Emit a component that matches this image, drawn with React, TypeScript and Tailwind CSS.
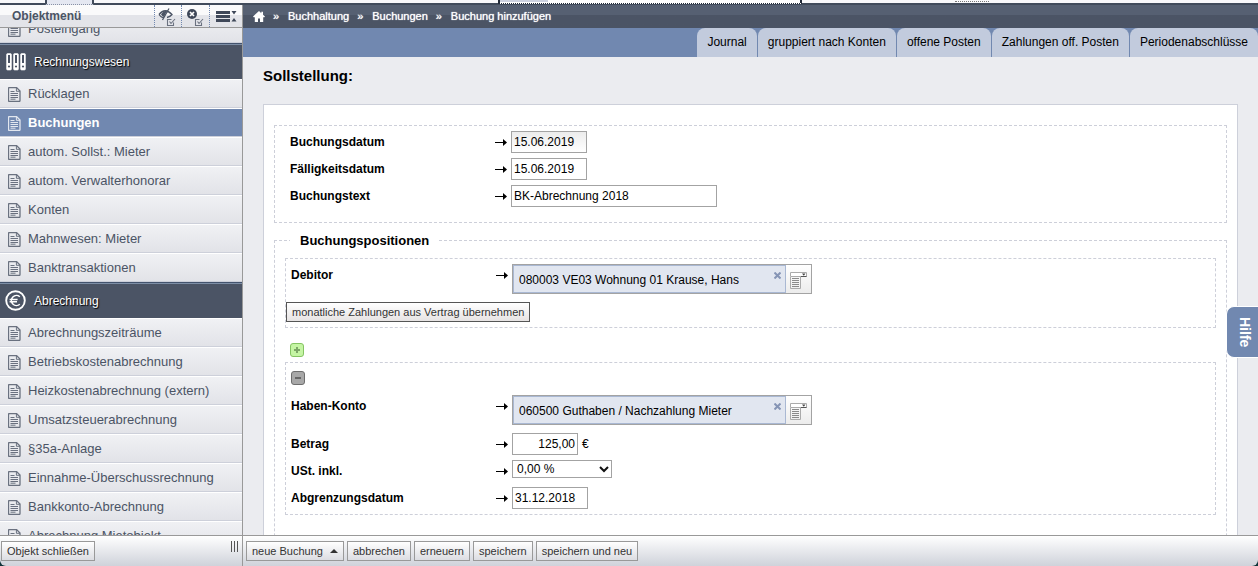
import React, { useState } from "react";

const objectItems = [
  "Rücklagen",
  "Buchungen",
  "autom. Sollst.: Mieter",
  "autom. Verwalterhonorar",
  "Konten",
  "Mahnwesen: Mieter",
  "Banktransaktionen",
];

const billingItems = [
  "Abrechnungszeiträume",
  "Betriebskostenabrechnung",
  "Heizkostenabrechnung (extern)",
  "Umsatzsteuerabrechnung",
  "§35a-Anlage",
  "Einnahme-Überschussrechnung",
  "Bankkonto-Abrechnung",
  "Abrechnung Mietobjekt",
];

const tabs = [
  "Journal",
  "gruppiert nach Konten",
  "offene Posten",
  "Zahlungen off. Posten",
  "Periodenabschlüsse",
];

const crumbs = ["Buchhaltung", "Buchungen", "Buchung hinzufügen"];

const DocIcon = () => (
  <svg width="13" height="15" viewBox="0 0 13 15" className="mt-px shrink-0 opacity-80" fill="none" stroke="currentColor">
    <path d="M1.5 .5h7l3.500 3.500v9.500q0 1-1 1H1.500q-1 0-1-1v-12q0-1 1-1z" strokeWidth="1.3" />
    <path d="M8.400 .500v3.800h3.600M2.500 4.500h4M2.500 6.500h7.500M2.500 8.500h7.500M2.500 10.500h7.500M2.500 12.200h5" />
  </svg>
);

const BinderIcon = () => (
  <svg width="21" height="18" viewBox="-1 0 21 18" className="shrink-0">
    {[0, 7, 14].map((x) => (
      <g key={x} transform={`translate(${x} 0)`}>
        <rect x=".6" y=".6" width="4.800" height="16.400" rx="1" fill="#fff" stroke="#fff" strokeWidth=".6" />
        <rect x="2" y="2" width="2" height="8" fill="#4b5465" />
        <circle cx="3" cy="13.500" r="1.100" fill="#4b5465" />
      </g>
    ))}
  </svg>
);

const EuroIcon = () => (
  <svg width="21" height="21" viewBox="0 0 21 21" className="shrink-0" fill="none" stroke="#fff">
    <circle cx="10.5" cy="10.5" r="9.3" strokeWidth="1.9" />
    <path d="M14.800 6.800a5 5 0 1 0 0 7.400M4.600 9.400h8M4.600 11.700h7.400" strokeWidth="1.5" />
  </svg>
);

const ArrowIcon = () => (
  <svg width="12" height="9" viewBox="0 0 12 9" className="mr-1 shrink-0">
    <path d="M0 4h9v1H0z" />
    <path d="M8 1l4 3.500-4 3.500z" />
  </svg>
);

const CheckMark = () => (
  <path
    d="M13.500 11.500h-4v6h6v-3M11.500 13.500l1.500 2 4-4.500"
    fill="none"
    stroke="#6b7280"
    strokeWidth="1.1"
  />
);

const HiddenIcon = () => (
  <svg width="18" height="18" viewBox="0 0 18 18" className="mt-px">
    <path d="M1 6.500Q7 -1 14 6.500Q12 9 9 9.500M1 6.500Q3 9.500 5.500 10M11 .5L4.500 12" fill="none" stroke="#4b5465" strokeWidth="1.3" />
    <path d="M3 6.500Q5 3 9 2.500L6 9Q4 8 3 6.500z" fill="#4b5465" />
    <CheckMark />
  </svg>
);

const CloseAllIcon = () => (
  <svg width="18" height="18" viewBox="0 0 18 18" className="mt-px">
    <circle cx="6" cy="6" r="5" fill="#3f4859" />
    <path d="M4 4l4 4M8 4l-4 4" stroke="#fff" strokeWidth="1.7" />
    <CheckMark />
  </svg>
);

const ListIcon = () => (
  <svg width="21" height="13" viewBox="0 0 21 13" fill="#3f4859">
    <path d="M0 1h14v3H0zM0 5h14v3H0zM0 9h14v3H0zM15.500 1h5L18 4.500zM15.500 11.500h5L18 8z" />
  </svg>
);

const HomeIcon = () => (
  <svg width="12" height="11" viewBox="0 0 12 11" fill="#fff">
    <path d="M6 0L0 5.500l1 1L1.800 6v5H5V7.500h2V11h3.200V6l.8.500 1-1-2-1.800V.800H8.300v1.400z" />
  </svg>
);

const PickerIcon = () => (
  <svg width="17" height="17" viewBox="0 0 17 17" fill="none" stroke="#8a8a8a">
    <path d="M.5 5v11.500h10V5" stroke="#aaa" />
    <path d="M.5 .5h16v4H.5z" fill="#fff" stroke="#aaa" />
    <path d="M11 4.500h5.500" stroke="#555" />
    <path d="M2 6.500h7M2 8.500h7M2 10.500h7M2 12.500h7M2 14.500h7" />
    <path d="M12 1.500h3.500l-1.700 2.300z" fill="#444" stroke="none" />
  </svg>
);

type MenuItemProps = { label: string; active?: boolean };

const MenuItem = ({ label, active }: MenuItemProps) => (
  <li>
    <a
      href="#"
      className={`flex h-[29px] items-center gap-[7px] border-t border-b border-t-white border-b-[#cdd0da] pl-2 text-[13px] ${
        active
          ? "bg-[#7188b0] font-bold text-white"
          : "bg-linear-to-b from-[#f0f1f4] to-[#e2e3e8] text-[#4b5465]"
      }`}
    >
      <DocIcon />
      {label}
    </a>
  </li>
);

type MenuSectionProps = { label: string; icon: React.ReactNode };

const MenuSection = ({ label, icon }: MenuSectionProps) => (
  <h2 className="flex h-9 items-center border-t border-[#43536d] bg-[#4b5465] text-xs text-white shadow-[inset_0_1px_0_#7d8ea6] text-shadow-[1px_1px_1px_#000]">
    <span className="flex w-[34px] justify-start pl-[5px]">{icon}</span>
    {label}
  </h2>
);

type FieldProps = { label: string; id: string; children: React.ReactNode };

const Field = ({ label, id, children }: FieldProps) => (
  <div className="flex items-start">
    <div className="flex h-[22px] w-[221px] shrink-0 items-center justify-between">
      <label htmlFor={id} className="font-bold">
        {label}
      </label>
      <ArrowIcon />
    </div>
    {children}
  </div>
);

const inputClass = "h-[22px] border border-[#a3a3a3] bg-white px-[2px] outline-none";

const AccountPicker = ({ id, initial }: { id: string; initial: string }) => {
  const [value, setValue] = useState(initial);
  return (
    <div className="flex h-[30px] w-[300px] border border-[#a3a3a3]">
      <div className="flex flex-1 items-start border border-[#a9b8d3] bg-[#e1e6f0]">
        <input
          id={id}
          value={value}
          onChange={(e) => setValue(e.target.value)}
          className="h-[27px] min-w-0 flex-1 pl-[5px] pt-px outline-none"
        />
        <button type="button" aria-label="Leeren" onClick={() => setValue("")} className="p-[4px] pt-[6px]">
          <svg width="7" height="7" viewBox="0 0 7 7" stroke="#8594b5" strokeWidth="2">
            <path d="M.5 .5l6 6M6.500 .5l-6 6" />
          </svg>
        </button>
      </div>
      <button
        type="button"
        aria-label="Auswählen"
        className="flex w-[25px] items-center justify-center bg-linear-to-b from-white to-[#ececec] pt-[2px]"
      >
        <PickerIcon />
      </button>
    </div>
  );
};

const FooterButton = ({ children }: { children: React.ReactNode }) => (
  <button
    type="button"
    className="flex h-5 items-center gap-[7px] border border-[#999] bg-linear-to-b from-white to-[#dcdde2] px-[5px] text-[11px] whitespace-nowrap text-[#333]"
  >
    {children}
  </button>
);

const TopStrip = () => (
  <div className="flex h-[5px] shrink-0 border-b-2 border-[#414b5b] bg-[#f8f8fa]">
    <div className="ml-[45px] h-[5px] w-[49px] border-x-2 border-b border-[#414b5b] border-b-[#8890a4] bg-[#e4e7f1] [border-bottom-style:dotted]" />
    <div className="ml-[404px] flex h-1 w-[304px] border-x-2 border-b border-[#222a38] bg-white [border-bottom-style:dotted]">
      <div className="h-[2px] w-12 bg-[#cdd2e0]" />
    </div>
    <div className="ml-[153px] h-[2px] w-[34px] border-b border-dotted border-[#777]" />
  </div>
);

const Sidebar = () => (
  <aside className="flex w-[243px] shrink-0 flex-col border-r border-[#999]">
    <header className="flex h-[23px] shrink-0 items-stretch border-b border-[#999] bg-linear-to-b from-[#fafafb] from-45% to-[#e3e4e9] to-45%">
      <h1 className="flex flex-1 items-center pl-3 text-xs font-bold text-[#4b5465]">Objektmenü</h1>
      <button type="button" aria-label="Ausblenden" className="w-[27px] border-l border-dotted border-[#7188b0] pl-[3px]">
        <HiddenIcon />
      </button>
      <button type="button" aria-label="Schließen" className="w-7 border-l border-dotted border-[#7188b0] pl-1">
        <CloseAllIcon />
      </button>
      <button type="button" aria-label="Liste" className="w-[33px] border-l border-dotted border-[#7188b0] pl-[6px]">
        <ListIcon />
      </button>
    </header>
    <nav className="min-h-0 flex-1 overflow-hidden bg-[#e8e9ed]">
      <ul className="-mt-3.5">
        <MenuItem label="Posteingang" />
      </ul>
      <MenuSection label="Rechnungswesen" icon={<BinderIcon />} />
      <ul>
        {objectItems.map((item) => (
          <MenuItem key={item} label={item} active={item === "Buchungen"} />
        ))}
      </ul>
      <MenuSection label="Abrechnung" icon={<EuroIcon />} />
      <ul>
        {billingItems.map((item) => (
          <MenuItem key={item} label={item} />
        ))}
      </ul>
    </nav>
  </aside>
);

const BookingForm = () => (
  <form className="mt-5 border border-[#cdd0da] bg-white px-[10px] pt-5 pb-10 text-xs text-black">
    <div className="flex flex-col gap-[5px] border border-dashed border-[#cdcfd9] px-[15px] pt-[5px] pb-[15px]">
      <Field label="Buchungsdatum" id="buchungsdatum">
        <input
          id="buchungsdatum"
          defaultValue="15.06.2019"
          className="h-[22px] w-[76px] border border-[#a3a3a3] bg-linear-to-b from-[#ececec] to-white px-[2px] outline-none"
        />
      </Field>
      <Field label="Fälligkeitsdatum" id="faelligkeit">
        <input id="faelligkeit" defaultValue="15.06.2019" className={`${inputClass} w-[76px]`} />
      </Field>
      <Field label="Buchungstext" id="buchungstext">
        <input id="buchungstext" defaultValue="BK-Abrechnung 2018" className={`${inputClass} w-[206px]`} />
      </Field>
    </div>

    <fieldset className="mt-[10px] border border-dashed border-[#cdcfd9] px-[10px] pb-20">
      <legend className="ml-[5px] px-[10px] text-[13px] leading-[15px] font-bold">Buchungspositionen</legend>
      <div className="mt-[10px] border border-dashed border-[#cdcfd9] py-[5px]">
        <div className="px-[5px]">
          <Field label="Debitor" id="debitor">
            <AccountPicker id="debitor" initial="080003 VE03 Wohnung 01 Krause, Hans" />
          </Field>
        </div>
        <button
          type="button"
          className="mt-2 flex h-5 items-center border border-[#555] bg-linear-to-b from-white to-[#e6e3e3] px-[5px] text-[11px] text-[#333]"
        >
          monatliche Zahlungen aus Vertrag übernehmen
        </button>
      </div>

      <button type="button" aria-label="Position hinzufügen" className="mt-[15px] ml-[5px] block">
        <svg width="14" height="14" viewBox="0 0 14 14">
          <rect x=".5" y=".5" width="13" height="13" rx="2.500" fill="#c5f5a4" stroke="#85c463" />
          <path d="M7 4v6M4 7h6" stroke="#7da767" strokeWidth="2" />
        </svg>
      </button>

      <div className="mt-[5px] border border-dashed border-[#cdcfd9] px-[5px] pt-2 pb-[5px]">
        <button type="button" aria-label="Position entfernen" className="block">
          <svg width="14" height="14" viewBox="0 0 14 14">
            <rect x=".5" y=".5" width="13" height="13" rx="2.500" fill="#a8a8a8" stroke="#6e6e6e" />
            <path d="M4 7h6" stroke="#666" strokeWidth="2" />
          </svg>
        </button>
        <div className="mt-[10px]">
          <Field label="Haben-Konto" id="habenkonto">
            <AccountPicker id="habenkonto" initial="060500 Guthaben / Nachzahlung Mieter" />
          </Field>
        </div>
        <div className="mt-2 flex flex-col gap-[5px]">
          <Field label="Betrag" id="betrag">
            <input id="betrag" defaultValue="125,00" className={`${inputClass} w-[66px] text-right`} />
            <span className="ml-1 leading-[22px]">€</span>
          </Field>
          <Field label="USt. inkl." id="ust">
            <div className="relative">
              <select id="ust" className="block h-[18px] w-[100px] appearance-none border border-[#a3a3a3] bg-white px-1 outline-none">
                <option>0,00 %</option>
                <option>7,00 %</option>
                <option>19,00 %</option>
              </select>
              <svg width="10" height="7" viewBox="0 0 10 7" className="pointer-events-none absolute top-[6px] right-[3px]">
                <path d="M1 1l4 4 4-4" fill="none" stroke="#111" strokeWidth="2" />
              </svg>
            </div>
          </Field>
          <Field label="Abgrenzungsdatum" id="abgrenzung">
            <input id="abgrenzung" defaultValue="31.12.2018" className={`${inputClass} w-[76px]`} />
          </Field>
        </div>
      </div>
    </fieldset>
  </form>
);

export default function App() {
  return (
    <div className="flex h-screen flex-col overflow-hidden bg-[#0f3338] font-['Liberation_Sans',Arial,sans-serif]">
      <TopStrip />
      <div className="flex min-h-0 flex-1">
        <Sidebar />
        <main className="relative flex min-w-0 flex-1 flex-col bg-[#ebecf0]">
          <nav className="flex h-[23px] shrink-0 items-center bg-linear-to-b from-[#566072] from-45% to-[#4b5465] to-45% pl-[10px] text-[11px] text-white text-shadow-[0_0_1px_#fff]">
            <a href="#" aria-label="Startseite">
              <HomeIcon />
            </a>
            {crumbs.map((crumb) => (
              <React.Fragment key={crumb}>
                <span className="w-[23px] pl-2">»</span>
                <a href="#">{crumb}</a>
              </React.Fragment>
            ))}
          </nav>
          <nav className="flex h-[29px] shrink-0 justify-end gap-px bg-[#7188b0]">
            {tabs.map((tab) => (
              <a
                key={tab}
                href="#"
                className="flex items-center rounded-t-lg bg-[#c2cbdd] px-[10px] pb-[2px] text-xs whitespace-nowrap text-black"
              >
                {tab}
              </a>
            ))}
          </nav>
          <div className="min-h-0 flex-1 overflow-hidden px-5 pt-[10px]">
            <h2 className="text-[15px] leading-[17px] font-bold text-black">Sollstellung:</h2>
            <BookingForm />
          </div>
          <button
            type="button"
            className="absolute top-[301px] right-0 flex h-[52px] w-8 items-center justify-center rounded-l-lg border border-r-0 border-white bg-[#7188b0] pl-1 text-sm font-bold text-white [writing-mode:vertical-rl]"
          >
            Hilfe
          </button>
        </main>
      </div>
      <footer className="flex h-[31px] shrink-0 rounded-b-md border-t border-[#999] bg-linear-to-b from-white to-[#cfd2da]">
        <div className="flex w-[243px] shrink-0 items-start justify-between border-r border-[#999] pt-[5px] pr-[3px] pl-px">
          <FooterButton>Objekt schließen</FooterButton>
          <svg width="9" height="11" viewBox="0 0 9 11" stroke="#555">
            <path d="M1.500 0v11M4.500 0v11M7.500 0v11" />
          </svg>
        </div>
        <div className="flex items-start gap-[3px] pt-[5px] pl-[3px]">
          <FooterButton>
            neue Buchung
            <svg width="8" height="4" viewBox="0 0 8 4" fill="#333">
              <path d="M4 0l4 4H0z" />
            </svg>
          </FooterButton>
          <FooterButton>abbrechen</FooterButton>
          <FooterButton>erneuern</FooterButton>
          <FooterButton>speichern</FooterButton>
          <FooterButton>speichern und neu</FooterButton>
        </div>
      </footer>
    </div>
  );
}
